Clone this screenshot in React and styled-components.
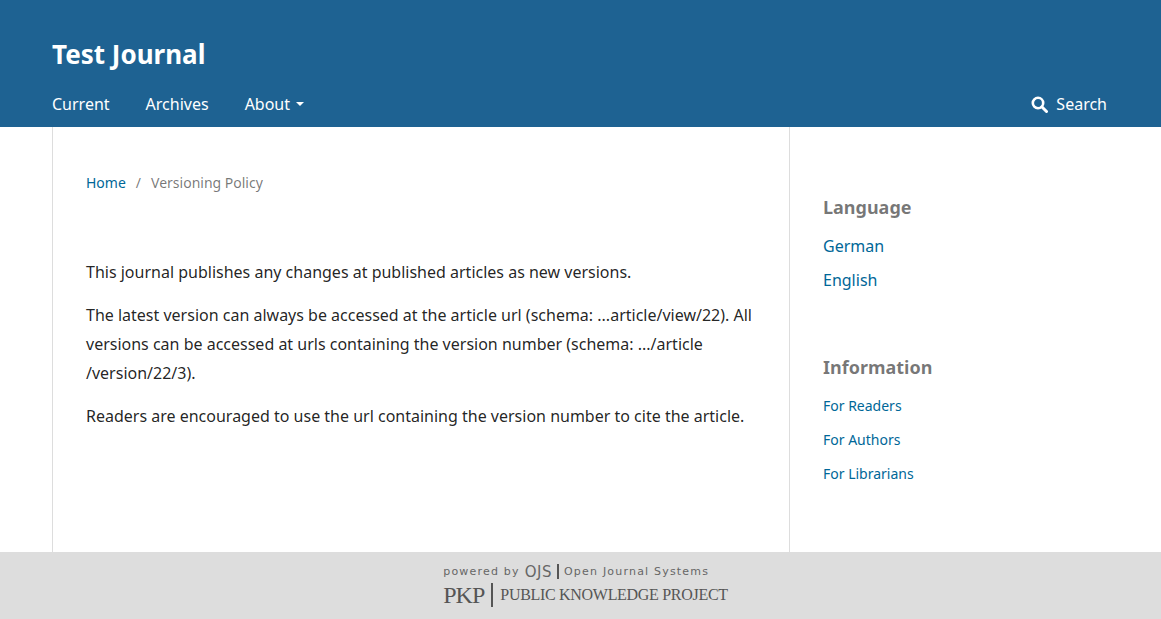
import React from 'react';
import styled, { createGlobalStyle } from 'styled-components';

const Global = createGlobalStyle`
  html, body { margin: 0; padding: 0; }
  body { font-family: 'Noto Sans', sans-serif; color: rgba(0,0,0,0.87); background: #fff; }
`;

const Header = styled.header`
  background: #1e6292;
  height: 127px;
  padding: 0 54px 0 52px;
  box-sizing: border-box;
  color: #fff;
`;

const Title = styled.h1`
  margin: 0;
  padding-top: 36px;
  height: 40px;
  font-size: 26px;
  font-weight: 700;
  line-height: 36px;
`;

const Nav = styled.nav`
  display: flex;
  align-items: center;
  margin-top: 14px;
  font-size: 16px;
  line-height: 28px;
`;

const NavItem = styled.span`
  margin-right: 36px;
  display: flex;
  align-items: center;
  gap: 6px;
`;

const Spacer = styled.div`flex: 1;`;

const Caret = styled.span`
  border-top: 4px solid #fff;
  border-left: 4px solid transparent;
  border-right: 4px solid transparent;
`;

const SearchLink = styled.span`
  display: flex;
  align-items: center;
  gap: 8px;
`;

const Body = styled.div`
  display: flex;
  margin: 0 52px;
  min-height: 425px;
`;

const Main = styled.main`
  width: 738px;
  border-left: 1px solid #ddd;
  border-right: 1px solid #ddd;
  padding: 46px 33px 0;
  box-sizing: border-box;
`;

const Crumbs = styled.div`
  font-size: 14px;
  color: rgba(0,0,0,0.54);
  margin-bottom: 66px;
  a { color: #006798; text-decoration: none; }
  span { margin: 0 10px; }
`;

const Para = styled.p`
  font-size: 16px;
  line-height: 29px;
  margin: 0 0 14px;
  color: rgba(0,0,0,0.87);
`;

const Side = styled.aside`
  padding: 66px 33px 0;
`;

const Block = styled.div`
  margin-bottom: 56px;
`;

const BlockTitle = styled.h2`
  font-size: 18px;
  font-weight: 700;
  color: rgba(0,0,0,0.54);
  margin: 0 0 8px;
  line-height: 28px;
`;

const SideLink = styled.a`
  display: block;
  color: #006798;
  text-decoration: none;
  font-size: ${p => (p.small ? '14px' : '16px')};
  line-height: ${p => (p.small ? '34px' : '34px')};
`;

const Footer = styled.footer`
  background: #ddd;
  height: 67px;
  display: flex;
  justify-content: center;
  align-items: center;
`;

const Brand = styled.div`
  display: flex;
  flex-direction: column;
  align-items: flex-start;
  color: #666;
  margin-left: 10px;
`;

const Powered = styled.div`
  font-family: 'DejaVu Sans', sans-serif;
  font-size: 11px;
  letter-spacing: 1.2px;
  display: flex;
  align-items: center;
  gap: 5px;
  b { font-weight: 400; font-size: 15px; letter-spacing: 0.5px; }
  i { width: 2px; height: 15px; background: #555; display: inline-block; }
`;

const Pkp = styled.div`
  font-family: 'Liberation Serif', serif;
  display: flex;
  align-items: center;
  gap: 7px;
  color: #555;
  margin-top: 1px;
  b { font-weight: 400; font-size: 24px; letter-spacing: -1px; }
  i { width: 2px; height: 24px; background: #555; display: inline-block; }
  span { font-size: 16px; letter-spacing: -0.3px; }
`;

export default function App() {
  return (
    <>
      <Global />
      <Header>
        <Title>Test Journal</Title>
        <Nav>
          <NavItem>Current</NavItem>
          <NavItem>Archives</NavItem>
          <NavItem>About <Caret /></NavItem>
          <Spacer />
          <SearchLink>
            <svg width="17" height="17" viewBox="0 0 17 17">
              <circle cx="7" cy="7" r="5.2" fill="none" stroke="#fff" strokeWidth="2.6" />
              <line x1="10.8" y1="10.8" x2="15.5" y2="15.5" stroke="#fff" strokeWidth="3" strokeLinecap="round" />
            </svg>
            Search
          </SearchLink>
        </Nav>
      </Header>
      <Body>
        <Main>
          <Crumbs><a>Home</a><span>/</span>Versioning Policy</Crumbs>
          <Para>This journal publishes any changes at published articles as new versions.</Para>
          <Para>The latest version can always be accessed at the article url (schema: ...article/view/22). All versions can be accessed at urls containing the version number (schema: .../article /version/22/3).</Para>
          <Para>Readers are encouraged to use the url containing the version number to cite the article.</Para>
        </Main>
        <Side>
          <Block>
            <BlockTitle>Language</BlockTitle>
            <SideLink>German</SideLink>
            <SideLink>English</SideLink>
          </Block>
          <Block>
            <BlockTitle>Information</BlockTitle>
            <SideLink small>For Readers</SideLink>
            <SideLink small>For Authors</SideLink>
            <SideLink small>For Librarians</SideLink>
          </Block>
        </Side>
      </Body>
      <Footer>
        <Brand>
          <Powered>powered by <b>OJS</b><i />Open Journal Systems</Powered>
          <Pkp><b>PKP</b><i /><span>PUBLIC KNOWLEDGE PROJECT</span></Pkp>
        </Brand>
      </Footer>
    </>
  );
}
